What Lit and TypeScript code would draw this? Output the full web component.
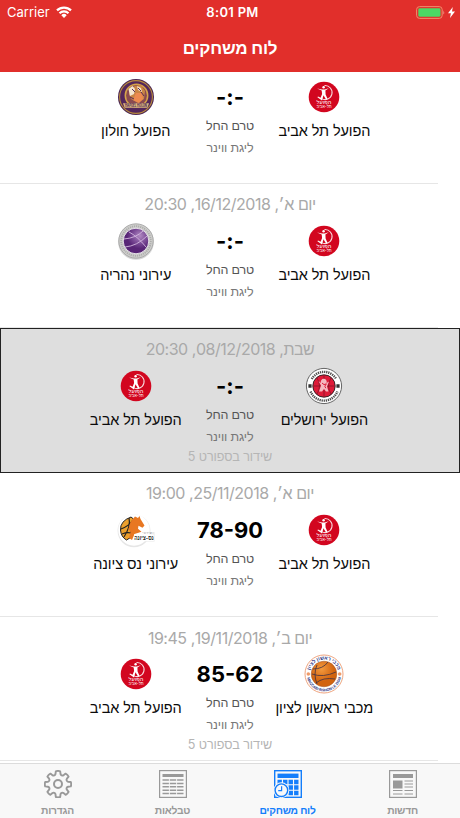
import { LitElement, html, css, svg } from 'lit';
import { customElement, property } from 'lit/decorators.js';

type Team = { name: string; logo: string };
type Game = {
  date: string;
  home: Team;
  away: Team;
  score: string;
  channel?: string;
  today?: boolean;
};

const telAviv: Team = { name: 'הפועל תל אביב', logo: 'telaviv' };
const holon: Team = { name: 'הפועל חולון', logo: 'holon' };
const nahariya: Team = { name: 'עירוני נהריה', logo: 'nahariya' };
const jerusalem: Team = { name: 'הפועל ירושלים', logo: 'jerusalem' };
const nessZiona: Team = { name: 'עירוני נס ציונה', logo: 'ness' };
const rishon: Team = { name: 'מכבי ראשון לציון', logo: 'rishon' };

const games: Game[] = [
  { date: '', home: telAviv, away: holon, score: '-:-' },
  { date: 'יום א׳, 16/12/2018, 20:30', home: telAviv, away: nahariya, score: '-:-' },
  { date: 'שבת, 08/12/2018, 20:30', home: jerusalem, away: telAviv, score: '-:-', channel: 'שידור בספורט 5', today: true },
  { date: 'יום א׳, 25/11/2018, 19:00', home: telAviv, away: nessZiona, score: '78-90' },
  { date: 'יום ב׳, 19/11/2018, 19:45', home: rishon, away: telAviv, score: '85-62', channel: 'שידור בספורט 5' },
];

// all logos share a 40x40 box centred on 20,20
const logos: Record<string, unknown> = {
  telaviv: svg`
    <circle cx="20" cy="20" r="15.3" fill="#d2061f" />
    <path d="M20.5 8.6A7 7 0 1 1 17.5 21.6" fill="none" stroke="#fff" stroke-width="1.1" opacity=".85" />
    <circle cx="19.6" cy="10.2" r="1.2" fill="#fff" />
    <path d="M13 11.4l5 1h2.8l4-1.2-3.4 2.4.2 3.8 2 4.6-1.6.4-2.5-4.2-1.5 5.4-4.6-3.4.6-.8 2.6 1.4 1.5-3.8-.4-3.4z" fill="#fff" />
    <text x="20" y="26.8" textLength="15" lengthAdjust="spacingAndGlyphs" fill="#fff" font-size="4.6">הפועל</text>
    <text x="20" y="31.4" textLength="15" lengthAdjust="spacingAndGlyphs" fill="#fff" font-size="4.6">תל-אביב</text>`,
  holon: svg`
    <circle cx="20" cy="20" r="18" fill="#4b2552" />
    <circle cx="20" cy="20" r="16.4" fill="#54275b" stroke="#b78a3d" stroke-width="1.1" />
    <circle cx="20.5" cy="18.5" r="11.2" fill="#8a4a50" stroke="#d6a449" stroke-width="1.5" />
    <path d="M13 17l2-6 4-2 6-1 4 6-1 8-6 4-7-4z" fill="#c98545" />
    <path d="M12.5 12l4-3 2.500 3-1 5-4 2zM21 9l4 2 1 4-4-2z" fill="#f5e6cf" />
    <path d="M20 16l6 0 1 6-4 4-6-3z" fill="#ee8a50" />
    <path d="M16 12l3 3M14 20l4 2M22 11l3 3M25 15l3 4" stroke="#5b2b56" />
    <path d="M7 26.2h26l-1.600 4.600H8.600z" fill="#dcb97e" />
    <text x="20" y="30.2" textLength="22" lengthAdjust="spacingAndGlyphs" fill="#4b2552" font-size="4.600" font-weight="700" direction="ltr">HAPOEL HOLON</text>`,
  nahariya: svg`
    <defs>
      <radialGradient id="violet" cx=".65" cy=".3"><stop stop-color="#b18bc2" /><stop offset=".5" stop-color="#81529c" /><stop offset="1" stop-color="#582576" /></radialGradient>
    </defs>
    <circle cx="20" cy="20.8" r="18" fill="#999" opacity=".4" />
    <circle cx="20" cy="20" r="17.2" fill="#cfcfcd" stroke="#999" stroke-width=".7" />
    <circle cx="20" cy="20" r="14.8" fill="none" stroke="#858585" stroke-width="1.8" stroke-dasharray="1.2 .9" opacity=".45" />
    <circle cx="20" cy="20" r="12.8" fill="url(#violet)" stroke="#e4e0e6" />
    <path d="M8 18q12-1 19-8M9 26q12-1 22-11M13 11q8 4 17 15" fill="none" stroke="#d3b7df" stroke-width=".9" />`,
  jerusalem: svg`
    <circle cx="20" cy="20" r="17.6" fill="#fff" stroke="#555" stroke-width=".9" />
    <path d="M7.8 13a14 14 0 0 1 24.4 0M6.6 25.5a14.4 14.4 0 0 0 26.8 0" fill="none" stroke="#222" stroke-width="2.4" stroke-dasharray="1.3 .8" opacity=".8" />
    <circle cx="20" cy="20" r="11.2" fill="#de1a38" stroke="#222" stroke-width=".9" />
    <path d="M20 9.4v21.2M9.4 20h21.2M13 12q5 8 0 16M27 12q-5 8 0 16" fill="none" stroke="#7a1426" stroke-width=".7" />
    <path d="M14.5 15l2.500 2a3 3 0 1 1 5.500 0l2.500-1.500-2 5 1.500 5h-2.500l-2-2.500-2 2.500h-3l2-6z" fill="#f5b9c0" />
    <path d="M18 17l2 1.600 2.400-.8-1.600 2.400 1 2" fill="none" stroke="#de1a38" />
    <path d="M4.4 18.2h3.2v3.6h-3.2zM32.4 18.2h3.2v3.6h-3.2z" fill="#333" />`,
  ness: svg`
    <circle cx="18" cy="20.8" r="16.4" fill="#e6e6e6" />
    <path d="M20 22h18.500v9.600H20z" fill="#e9e9e9" />
    <circle cx="18" cy="20" r="15.7" fill="#fff" />
    <path d="M15 7Q4 11 4.500 20q.5 7 6 10l5-3-1-5 4-5-1-8z" fill="#eca02d" stroke="#222" />
    <path d="M13 8q2 8-5 19M5 19q8-3 12-9M6 24q5-2 9-1" fill="none" stroke="#222" stroke-width="1.2" />
    <path d="M19 6.500l3 1.500 1.500-2 1 3 4 6.500-2 2.300-4-2-.5 3 3.500 3-3 1-4 1.200-2.500 6-3-2 1.500-6-2-3 2-7z" fill="#e87722" />
    <rect x="18" y="24.300" width="19.800" height="6.800" fill="#fff" />
    <text x="28" y="30" textLength="19.500" lengthAdjust="spacingAndGlyphs" fill="#222" font-size="6" font-weight="700">נס-ציונה</text>
    <text x="31" y="23.600" textLength="9" fill="#777" font-size="3">עירוני</text>`,
  rishon: svg`
    <defs>
      <path id="rishonTop" d="M5.6 20a14.4 14.4 0 0 1 28.8 0" />
      <path id="rishonBottom" d="M2.6 20a17.4 17.4 0 0 0 34.8 0" />
      <radialGradient id="ball" cx=".4" cy=".3"><stop stop-color="#f39a3e" /><stop offset="1" stop-color="#d2640f" /></radialGradient>
    </defs>
    <circle cx="20" cy="20" r="19" fill="#fff" stroke="#ec9a70" stroke-width=".9" />
    <circle cx="20" cy="20" r="12.8" fill="url(#ball)" stroke="#a35320" stroke-width=".5" />
    <path d="M8 20q11 4 24-2M9 15q10 0 15-7M12 29q7-6 19-4M13 11q-4 9 0 19" fill="none" stroke="#3f3043" stroke-width=".8" />
    <text fill="#2c3585" font-size="5" font-weight="700"><textPath href="#rishonTop" startOffset="50%">מכבי ראשון לציון</textPath></text>
    <text fill="#2c3585" font-size="3.600" font-weight="700" direction="ltr"><textPath href="#rishonBottom" startOffset="50%">MACCABI RISHON LE ZION</textPath></text>
    <circle cx="4.3" cy="20" r="1.8" fill="#ef9a68" /><circle cx="35.7" cy="20" r="1.8" fill="#ef9a68" />`,
};

@customElement('team-badge')
export class TeamBadge extends LitElement {
  @property({ attribute: false }) team!: Team;

  static override styles = css`
    :host {
      display: flex;
      flex-direction: column;
      align-items: center;
      white-space: nowrap;
    }
    .badge__logo {
      display: block;
      width: 40px;
      height: 40px;
      text-anchor: middle;
    }
    .badge__name {
      margin-top: 4px;
      font-size: 14.5px;
      letter-spacing: -0.12px;
      line-height: 20px;
      color: #0b0b0b;
    }
  `;
  override render() {
    return html`
      <svg class="badge__logo" viewBox="0 0 40 40">${logos[this.team.logo]}</svg>
      <span class="badge__name">${this.team.name}</span>
    `;
  }
}

@customElement('game-row')
export class GameRow extends LitElement {
  @property({ attribute: false }) game!: Game;

  static override styles = css`
    :host {
      display: block;
      flex: none;
      height: 144.4px;
    }
    .game {
      position: relative;
      box-sizing: border-box;
      height: 100%;
      padding-top: 10.5px;
    }
    .game::after {
      content: '';
      position: absolute;
      left: 0;
      right: 22px;
      bottom: 0;
      height: 1px;
      background: #e6e6e6;
    }
    .game--today {
      background: #dedede;
      border: 1.5px solid #222;
      padding-top: 9.8px;
    }
    .game--today::after {
      display: none;
    }
    .game__date {
      height: 20px;
      line-height: 20px;
      font-size: 16px;
      letter-spacing: -0.47px;
      text-align: center;
      color: #a9a9a9;
    }
    .game__body {
      display: grid;
      grid-template-columns: repeat(3, 94.3px);
      justify-content: center;
      margin-top: 6.5px;
    }
    .game__middle {
      display: flex;
      flex-direction: column;
      align-items: center;
      white-space: nowrap;
    }
    .game__score {
      direction: ltr;
      height: 38px;
      line-height: 41px;
      font-size: 22px;
      font-weight: 700;
      color: #000;
    }
    .game__status,
    .game__league {
      line-height: 22px;
      font-size: 12.5px;
      letter-spacing: -0.15px;
      color: #555;
    }
    .game__league {
      color: #777;
    }
    .game__channel {
      line-height: 18px;
      font-size: 12.6px;
      letter-spacing: -0.1px;
      color: #b5b5b5;
    }
  `;
  override render() {
    const { date, home, away, score, channel, today } = this.game;
    return html`
      <div class="game ${today ? 'game--today' : ''}">
        <div class="game__date">${date}</div>
        <div class="game__body">
          <team-badge .team=${home}></team-badge>
          <div class="game__middle">
            <span class="game__score">${score}</span>
            <span class="game__status">טרם החל</span>
            <span class="game__league">ליגת ווינר</span>
            ${channel ? html`<span class="game__channel">${channel}</span>` : ''}
          </div>
          <team-badge .team=${away}></team-badge>
        </div>
      </div>
    `;
  }
}

const tabs = [
  {
    label: 'חדשות',
    icon: svg`
      <rect x=".6" y=".6" width="26.8" height="26.8" />
      <path d="M4 6h20" stroke-width="4" />
      <path d="M4 10.5h9.5v8H4z" fill="currentColor" stroke="none" />
      <path d="M15.5 11H24M15.5 14H24M15.5 17H24M4 20.5h9.5M15.5 20.5H24M4 24h9.5M15.5 24H24" />`,
  },
  {
    label: 'לוח משחקים',
    active: true,
    icon: svg`
      <rect x=".7" y=".7" width="26.6" height="26.6" stroke-width="1.4" />
      <path d="M3.500 5.800h21" stroke-width="4.400" />
      <path d="M3.500 12h21M3.500 17.500h21M3.500 23h21" stroke-width="4.300" stroke-dasharray="4.400 1.130" />
      <circle cx="7.4" cy="20.2" r="6.6" fill="#f8f8f8" stroke="#f8f8f8" stroke-width="2.5" />
      <circle cx="7.4" cy="20.2" r="6.3" stroke-width="1.4" />
      <path d="M7.6 16.2v4.4H4.2" />`,
  },
  {
    label: 'טבלאות',
    icon: svg`
      <rect x=".6" y=".6" width="26.8" height="26.8" />
      <path d="M3.5 5.5h21" stroke-width="3" />
      <path d="M3.5 10h21M3.5 13.4h21M3.5 16.8h21M3.5 20.2h21M3.5 23.6h21" stroke-dasharray="6.400 .9" stroke-width="1.5" />`,
  },
  {
    label: 'הגדרות',
    icon: svg`
      <path stroke-width="1.9" stroke-linejoin="round" d="M11.800 1.300q2.200-.8 4.400 0l.3 2.700q.2 1 1.200 1.400 1 .4 1.800-.2l2.100-1.600q2 .9 3 3l-1.700 2.100q-.6.8-.2 1.800t1.400 1.200l2.700.3q.8 2.200 0 4.400l-2.700.3q-1 .2-1.400 1.200t.2 1.800l1.700 2.100q-1 2-3 3l-2.100-1.700q-.8-.6-1.800-.2t-1.200 1.400l-.3 2.700q-2.200.8-4.400 0l-.3-2.700q-.2-1-1.200-1.400t-1.800.2l-2.100 1.700q-2-1-3-3l1.700-2.100q.6-.8.2-1.800t-1.400-1.200l-2.700-.3q-.8-2.200 0-4.400l2.700-.3q1-.2 1.400-1.200t-.2-1.800l-1.700-2.100q1-2.100 3-3l2.100 1.600q.8.6 1.800.2t1.200-1.400z" />
      <circle cx="14" cy="14" r="4" stroke-width="2" />`,
  },
];

@customElement('app-root')
export class AppRoot extends LitElement {
  static override styles = css`
    :host {
      display: flex;
      flex-direction: column;
      width: 460px;
      height: 818px;
      overflow: hidden;
      direction: rtl;
      background: #fff;
      font-family: Inter, 'Liberation Sans', sans-serif;
    }
    .header {
      flex: none;
      box-sizing: border-box;
      height: 71.5px;
      background: #e12f2b;
      color: #fff;
    }
    .status {
      display: grid;
      grid-template-columns: 1fr auto 1fr;
      align-items: center;
      direction: ltr;
      height: 24px;
      padding: 0 5px 0 7px;
      font-size: 13px;
      letter-spacing: 0;
    }
    .status__side {
      display: flex;
      align-items: center;
      gap: 6px;
    }
    .status__side--end {
      justify-content: flex-end;
      gap: 3px;
    }
    .status__time {
      margin-left: 3px;
      font-weight: 600;
      letter-spacing: 0.3px;
    }
    .header__title {
      margin: 0;
      line-height: 48px;
      font-size: 17px;
      letter-spacing: -0.2px;
      font-weight: 700;
      text-align: center;
    }
    .games {
      flex: 1;
      min-height: 0;
      display: flex;
      flex-direction: column;
      overflow: hidden;
    }
    .games__first {
      margin-top: -32px;
    }
    .tabs {
      flex: none;
      display: grid;
      grid-template-columns: repeat(4, 1fr);
      box-sizing: border-box;
      height: 55px;
      padding-top: 6px;
      border-top: 1px solid #dcdcdc;
      background: #f8f8f8;
    }
    .tabs__item {
      display: flex;
      flex-direction: column;
      align-items: center;
      color: #999;
      font-size: 10.3px;
      letter-spacing: -0.25px;
      font-weight: 600;
      line-height: 16px;
    }
    .tabs__item--active {
      color: #147efb;
    }
    .tabs__icon {
      width: 28px;
      height: 28px;
      margin-bottom: 4px;
      fill: none;
      stroke: currentColor;
      stroke-width: 1.2;
    }
  `;
  override render() {
    return html`
      <header class="header">
        <div class="status">
          <div class="status__side">
            <span>Carrier</span>
            <svg width="16" height="12" viewBox="0 0 16 12" fill="none" stroke="#fff" stroke-width="2.2">
              <path d="M1 4.4a10 10 0 0 1 14 0M3.5 7.2a6.4 6.4 0 0 1 9 0" />
              <path d="M8 12L5.3 9.2a3.8 3.8 0 0 1 5.4 0z" fill="#fff" stroke="none" />
            </svg>
          </div>
          <span class="status__time">8:01 PM</span>
          <div class="status__side status__side--end">
            <svg width="29" height="13" viewBox="0 0 29 13">
              <rect x=".6" y=".6" width="25.6" height="11.8" rx="3" fill="none" stroke="#f08c6c" />
              <rect x="2.3" y="2.3" width="22.2" height="8.4" rx="1.4" fill="#4cd964" />
              <path d="M27.4 4.5q1.6 2 0 4z" fill="#f0988f" />
            </svg>
            <svg width="7" height="11" viewBox="0 0 7 11"><path d="M4.8 0L0 6.2h2.9L2 11l5-6.4H4z" fill="#fff" /></svg>
          </div>
        </div>
        <h1 class="header__title">לוח משחקים</h1>
      </header>
      <main class="games">
        ${games.map((game, i) => html`<game-row class=${i === 0 ? 'games__first' : ''} .game=${game}></game-row>`)}
      </main>
      <nav class="tabs">
        ${tabs.map(
          (tab) => html`
            <div class="tabs__item ${tab.active ? 'tabs__item--active' : ''}">
              <svg class="tabs__icon" viewBox="0 0 28 28">${tab.icon}</svg>
              <span>${tab.label}</span>
            </div>
          `
        )}
      </nav>
    `;
  }
}
